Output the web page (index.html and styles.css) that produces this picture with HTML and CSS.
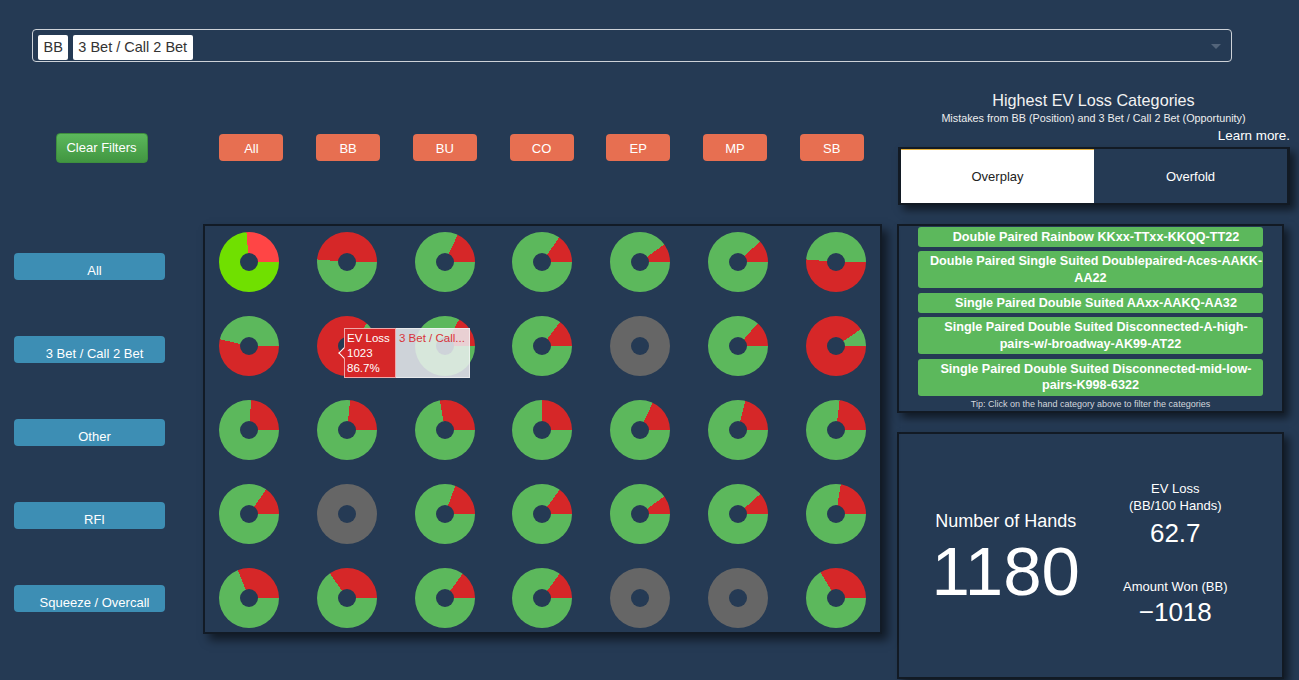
FILE: index.html
```html
<!DOCTYPE html>
<html lang="en">
<head>
<meta charset="utf-8">
<title>EV Loss Dashboard</title>
<link rel="stylesheet" href="styles.css">
</head>
<body>
<div class="top">
  <div class="select">
    <span class="tag">BB</span>
    <span class="tag">3 Bet / Call 2 Bet</span>
    <span class="arrow"></span>
  </div>
</div>

<div class="main">
  <div class="left">
    <div class="hdr">
      <div class="clear-cell"><button class="btn-clear">Clear Filters</button></div>
      <div class="pos-row">
        <div class="pos-cell"><button class="btn-pos">All</button></div>
        <div class="pos-cell"><button class="btn-pos">BB</button></div>
        <div class="pos-cell"><button class="btn-pos">BU</button></div>
        <div class="pos-cell"><button class="btn-pos">CO</button></div>
        <div class="pos-cell"><button class="btn-pos">EP</button></div>
        <div class="pos-cell"><button class="btn-pos">MP</button></div>
        <div class="pos-cell"><button class="btn-pos">SB</button></div>
      </div>
    </div>

    <div class="body">
      <div class="labels">
        <button class="btn-row">All</button>
        <button class="btn-row">3 Bet / Call 2 Bet</button>
        <button class="btn-row">Other</button>
        <button class="btn-row">RFI</button>
        <button class="btn-row">Squeeze / Overcall</button>
      </div>

      <div class="panel">
        <div class="d h" style="--a:265deg"></div>
        <div class="d g" style="--a:185deg"></div>
        <div class="d g" style="--a:295deg"></div>
        <div class="d g" style="--a:305deg"></div>
        <div class="d g" style="--a:324deg"></div>
        <div class="d g" style="--a:317deg"></div>
        <div class="d r" style="--a:185deg"></div>

        <div class="d r" style="--a:193deg"></div>
        <div class="d r" style="--a:312deg"></div>
        <div class="d g" style="--a:298deg"></div>
        <div class="d g" style="--a:307deg"></div>
        <div class="d x"></div>
        <div class="d g" style="--a:311deg"></div>
        <div class="d r" style="--a:326deg"></div>

        <div class="d g" style="--a:274deg"></div>
        <div class="d g" style="--a:276deg"></div>
        <div class="d g" style="--a:260deg"></div>
        <div class="d g" style="--a:270deg"></div>
        <div class="d g" style="--a:295deg"></div>
        <div class="d g" style="--a:284deg"></div>
        <div class="d g" style="--a:277deg"></div>

        <div class="d g" style="--a:305deg"></div>
        <div class="d x"></div>
        <div class="d g" style="--a:290deg"></div>
        <div class="d g" style="--a:306deg"></div>
        <div class="d g" style="--a:324deg"></div>
        <div class="d g" style="--a:318deg"></div>
        <div class="d g" style="--a:279deg"></div>

        <div class="d g" style="--a:248deg"></div>
        <div class="d g" style="--a:235deg"></div>
        <div class="d g" style="--a:306deg"></div>
        <div class="d g" style="--a:306deg"></div>
        <div class="d x"></div>
        <div class="d x"></div>
        <div class="d g" style="--a:239deg"></div>

        <div class="tip">
          <div class="tip-red">EV Loss<br>1023<br>86.7%</div>
          <div class="tip-gray">3 Bet / Call...</div>
        </div>
      </div>
    </div>
  </div>

  <div class="right">
    <div class="title">Highest EV Loss Categories</div>
    <div class="subtitle">Mistakes from BB (Position) and 3 Bet / Call 2 Bet (Opportunity)</div>
    <div class="learn">Learn more.</div>

    <div class="tabs">
      <div class="tab active">Overplay</div>
      <div class="tab">Overfold</div>
    </div>

    <div class="cats">
      <div class="cat"><span class="sp"></span>Double Paired Rainbow KKxx-TTxx-KKQQ-TT22</div>
      <div class="cat"><span class="sp"></span>Double Paired Single Suited Doublepaired-Aces-AAKK-AA22</div>
      <div class="cat"><span class="sp"></span>Single Paired Double Suited AAxx-AAKQ-AA32</div>
      <div class="cat"><span class="sp"></span>Single Paired Double Suited Disconnected-A-high-pairs-w/-broadway-AK99-AT22</div>
      <div class="cat"><span class="sp"></span>Single Paired Double Suited Disconnected-mid-low-pairs-K998-6322</div>
      <div class="tiptext">Tip: Click on the hand category above to filter the categories</div>
    </div>

    <div class="stats">
      <div class="stat-left">
        <div class="nh-label">Number of Hands</div>
        <div class="nh-value">1180</div>
      </div>
      <div class="stat-right">
        <div class="sm-label">EV Loss<br>(BB/100 Hands)</div>
        <div class="sm-value">62.7</div>
        <div class="sm-label aw">Amount Won (BB)</div>
        <div class="sm-value aw-v">−1018</div>
      </div>
    </div>
  </div>
</div>
</body>
</html>
```

FILE: styles.css
```css
* { box-sizing: border-box; }

body {
  margin: 0;
  background: #253a54;
  font-family: "Liberation Sans", Arial, sans-serif;
  color: #fff;
  height: 680px;
  overflow: hidden;
}

button {
  font-family: "Liberation Sans", Arial, sans-serif;
  border: none;
  color: #fff;
  cursor: pointer;
}

/* ---------- top select ---------- */
.top {
  padding: 29px 0 0 32px;
}

.select {
  position: relative;
  width: 1200px;
  height: 33px;
  border: 1px solid #cdd2d8;
  border-radius: 4px;
  display: flex;
  align-items: flex-end;
  gap: 4.5px;
  padding: 0 0 1px 5px;
}

.tag {
  background: #fff;
  color: #333;
  font-size: 14.5px;
  height: 25px;
  line-height: 25px;
  padding: 0 5.5px;
  border-radius: 2px;
}

.arrow {
  position: absolute;
  right: 10px;
  top: 14px;
  width: 0;
  height: 0;
  border-left: 5px solid transparent;
  border-right: 5px solid transparent;
  border-top: 5px solid #53647a;
}

/* ---------- layout ---------- */
.main {
  display: flex;
}

.left {
  width: 890px;
}

.hdr {
  display: flex;
  align-items: flex-start;
  margin-top: 71px;
}

.clear-cell {
  width: 203px;
  display: flex;
  justify-content: center;
}

.btn-clear {
  width: 92px;
  height: 30px;
  font-size: 13px;
  padding: 0 0 2px;
  border-radius: 4px;
  border: 1px solid #3e8f3e;
  background: linear-gradient(#5cb85c, #419641);
}

.pos-row {
  display: flex;
  width: 677px;
  margin-top: 1px;
}

.pos-cell {
  flex: 1;
  display: flex;
  justify-content: center;
}

.btn-pos {
  width: 64px;
  height: 27px;
  font-size: 13px;
  padding: 2px 0 0;
  border-radius: 4px;
  background: #e76f51;
}

.body {
  display: flex;
  margin-top: 61px;
}

.labels {
  width: 203px;
  padding: 29px 0 0 14px;
  display: flex;
  flex-direction: column;
  gap: 56px;
}

.btn-row {
  width: 151px;
  height: 27px;
  font-size: 13px;
  padding: 8px 0 0 10px;
  border-radius: 4px;
  background: #3d8eb4;
  display: flex;
  align-items: center;
  justify-content: center;
}

/* ---------- donut panel ---------- */
.panel {
  position: relative;
  width: 679px;
  height: 410px;
  border: 2px solid #121b26;
  box-shadow: 6px 6px 9px rgba(0, 0, 0, 0.55);
  padding: 5.5px 14px;
  display: grid;
  grid-template-columns: repeat(7, 60px);
  justify-content: space-between;
  align-content: start;
  row-gap: 24px;
}

.d {
  position: relative;
  width: 60px;
  height: 60px;
  border-radius: 50%;
}

.d.g { background: conic-gradient(from 90deg, #5cb85c 0 var(--a), #d62728 0); }
.d.r { background: conic-gradient(from 90deg, #d62728 0 var(--a), #5cb85c 0); }
.d.h { background: conic-gradient(from 90deg, #70e000 0 var(--a), #ff4545 0); }
.d.x { background: #666; }

.d::after {
  content: "";
  position: absolute;
  left: 21px;
  top: 21px;
  width: 18px;
  height: 18px;
  border-radius: 50%;
  background: #253a54;
}

.tip {
  position: absolute;
  left: 139px;
  top: 102px;
  height: 50px;
  display: flex;
  font-size: 11.5px;
  line-height: 15px;
}

.tip-red {
  position: relative;
  width: 52px;
  background: #d62728;
  border: 1px solid rgba(255, 255, 255, 0.6);
  padding: 2px 0 0 2px;
  color: #fff;
}

.tip-red::before {
  content: "";
  position: absolute;
  left: -5px;
  top: 20px;
  width: 7px;
  height: 7px;
  background: #d62728;
  border-left: 1px solid #fff;
  border-bottom: 1px solid #fff;
  transform: rotate(45deg);
}

.tip-gray {
  width: 74px;
  background: rgba(236, 238, 241, 0.85);
  border: 1px solid rgba(255, 255, 255, 0.5);
  border-left: none;
  padding: 2px 0 0 3px;
  color: #d8343a;
  white-space: nowrap;
  overflow: hidden;
}

/* ---------- right column ---------- */
.right {
  width: 393px;
  margin-left: 7px;
  padding-top: 28.5px;
}

.title {
  text-align: center;
  font-size: 16.2px;
  line-height: 19px;
  color: #f2f2f2;
}

.subtitle {
  text-align: center;
  font-size: 10.8px;
  line-height: 13px;
  margin-top: 2px;
  color: #eee;
}

.learn {
  text-align: right;
  font-size: 13.4px;
  line-height: 16px;
  margin-top: 3.5px;
}

.tabs {
  display: flex;
  margin: 3px 0 0 1px;
  width: 392px;
  height: 58px;
  border: 2px solid #121a24;
  border-left-width: 3px;
  border-right-width: 3px;
  box-shadow: 5px 5px 8px rgba(0, 0, 0, 0.55);
}

.tab {
  flex: 1;
  display: flex;
  align-items: center;
  justify-content: center;
  font-size: 13px;
  color: #fff;
}

.tab.active {
  background: #fff;
  color: #222;
  border-top: 1px solid #e4b03c;
}

.cats {
  margin-top: 19px;
  width: 387px;
  border: 2px solid #121a24;
  box-shadow: 5px 5px 8px rgba(0, 0, 0, 0.55);
  padding: 0.5px 19px 1px;
  display: flex;
  flex-direction: column;
  gap: 4.3px;
}

.cat {
  background: #5cb85c;
  border-radius: 3px;
  font-weight: bold;
  font-size: 12.65px;
  line-height: 16.5px;
  padding: 2px 0;
  text-align: center;
}

.sp {
  display: inline-block;
  width: 11px;
}

.tiptext {
  text-align: center;
  font-size: 9px;
  line-height: 11px;
  color: #d3d7dd;
  margin-top: -1px;
}

.stats {
  margin-top: 19px;
  width: 387px;
  height: 247px;
  border: 2px solid #121a24;
  box-shadow: 5px 5px 8px rgba(0, 0, 0, 0.55);
  display: grid;
  grid-template-columns: 1fr 1fr;
  padding: 0 22px;
  align-items: start;
  text-align: center;
}

.stat-left {
  padding-top: 76px;
}

.nh-label {
  font-size: 18px;
  line-height: 22px;
}

.nh-value {
  font-size: 69px;
  line-height: 72px;
  margin-top: 4.5px;
}

.stat-right {
  padding-top: 46.5px;
}

.sm-label {
  font-size: 13px;
  line-height: 17px;
}

.sm-value {
  font-size: 26px;
  line-height: 30px;
  margin-top: 4px;
}

.sm-label.aw {
  margin-top: 29.5px;
}

.sm-value.aw-v {
  margin-top: 2px;
}
```
